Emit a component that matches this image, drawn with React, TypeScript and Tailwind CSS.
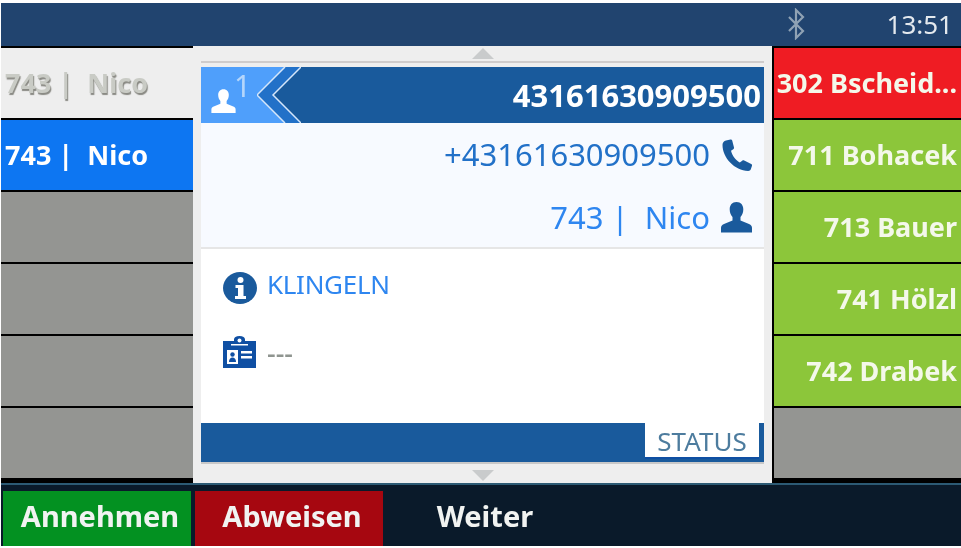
const PersonIcon = ({ className }: { className: string }) => (
  <svg viewBox="0 0 32 32" className={className} fill="currentColor">
    <path d="M16 1c-4.400 0-6.800 3.200-6.800 7.400 0 3.200 1.200 5.800 2.800 7.600v3.400L3.500 23C1.300 24 .5 25 .5 27v4.500h31V27c0-2-.8-3-3-4L20 19.400V16c1.600-1.800 2.800-4.400 2.800-7.600C22.800 4.200 20.400 1 16 1z" />
  </svg>
);

const PhoneIcon = ({ className }: { className: string }) => (
  <svg viewBox="0 0 32 32" className={className} fill="currentColor">
    <path d="M5 1.500 9.500.5c.8-.2 1.500.2 1.700 1l1.800 7c.2.700-.1 1.300-.7 1.700l-2.300 1.500c1.200 5 4.500 9.300 8.800 11.700l2.400-1.700c.6-.4 1.300-.5 2-.2l7 3.400c.7.300 1 1 .8 1.800l-1.200 3.600c-.4 1.100-1.400 1.700-2.600 1.700C13.500 31.500 1.500 19 1.500 5.800 1.500 3.600 3 2 5 1.500z" />
  </svg>
);

const InfoIcon = () => (
  <svg viewBox="0 0 34 32" className="w-[34px] h-[32px] text-[#1a5a9c]">
    <ellipse cx="17" cy="16" rx="17" ry="16" fill="currentColor" />
    <circle cx="17.500" cy="8" r="3" fill="white" />
    <path d="M12.500 13h8v11h2.500v3H12v-3h3v-8h-2.500z" fill="white" />
  </svg>
);

const BadgeIcon = () => (
  <svg viewBox="0 0 33 32" className="w-[33px] h-[32px]">
    <path d="M0 5h11V3.500C11 1.500 13 0 16.500 0S22 1.500 22 3.500V5h11v27H0z" fill="#0f4fa3" />
    <circle cx="16.500" cy="4.500" r="2" fill="white" />
    <rect x="8" y="8" width="17" height="1.500" fill="white" />
    <rect x="4" y="14" width="11" height="14" fill="white" />
    <circle cx="9.500" cy="18.500" r="2.200" fill="#0f4fa3" />
    <path d="M6 26c0-3 1.500-4.500 3.500-4.500S13 23 13 26z" fill="#0f4fa3" />
    <rect x="18" y="15" width="11" height="2.500" fill="white" />
    <rect x="18" y="20" width="11" height="2.500" fill="white" />
  </svg>
);

const BluetoothIcon = () => (
  <svg viewBox="0 0 18 32" className="w-[18px] h-[32px]" fill="none" stroke="#8fa2b4" strokeWidth="2.200">
    <path d="M2 9 16 23 9 30V2l7 7L2 23" />
  </svg>
);

const Arrow = ({ up }: { up: boolean }) => (
  <svg viewBox="0 0 22 11" className="w-[22px] h-[11px]">
    <path d={up ? "M0 11 11 0l11 11z" : "M0 0h22L11 11z"} fill="#c9cbcc" />
  </svg>
);

const leftRows = [
  { label: "743 |  Nico", cls: "bg-[#eeeeee] text-[#c9cbc5] [text-shadow:1px_2px_1px_#8a8a84]" },
  { label: "743 |  Nico", cls: "bg-[#0d76f2] text-white" },
  { label: "", cls: "bg-[#949592]" },
  { label: "", cls: "bg-[#949592]" },
  { label: "", cls: "bg-[#949592]" },
  { label: "", cls: "bg-[#949592]" },
];

const rightRows = [
  { label: "302 Bscheid...", cls: "bg-[#ef1c23]" },
  { label: "711 Bohacek", cls: "bg-[#8cc63a]" },
  { label: "713 Bauer", cls: "bg-[#8cc63a]" },
  { label: "741 Hölzl", cls: "bg-[#8cc63a]" },
  { label: "742 Drabek", cls: "bg-[#8cc63a]" },
  { label: "", cls: "bg-[#949592]" },
];

export default function App() {
  return (
    <div className="w-[961px] h-[548px] overflow-hidden bg-white pt-[3px] pl-[1px] pb-[2px] flex flex-col font-['Noto_Sans',sans-serif] blur-[0.6px]">
      <header className="h-[43px] shrink-0 bg-[#21446f] flex items-center justify-end pb-[2px]">
        <BluetoothIcon />
        <span className="ml-[82px] mr-[8px] text-[26px] leading-none text-[#e4e9ee]">13:51</span>
      </header>

      <main className="h-[437px] shrink-0 flex bg-black">
        <div className="w-[192px] shrink-0 flex flex-col gap-[2px] pt-[2px]">
          {leftRows.map((r, i) => (
            <div key={i} className={`h-[70px] shrink-0 flex items-center pl-[4px] font-bold text-[27px] whitespace-pre ${r.cls}`}>
              {r.label}
            </div>
          ))}
        </div>

        <section className="w-[579px] shrink-0 bg-[#eeeeee] px-[8px] flex flex-col">
          <div className="h-[15px] shrink-0 flex justify-center items-end pb-[2px]">
            <Arrow up />
          </div>
          <div className="h-[6px] shrink-0 border-t-2 border-[#cfcccc]" />

          <div className="h-[56px] shrink-0 flex bg-[#195a9c]">
            <div className="w-[56px] shrink-0 bg-[#4f9ffb] flex items-end pl-[10px] pb-[9px] relative text-white">
              <PersonIcon className="w-[25px] h-[26px]" />
              <span className="text-[30px] leading-none text-[#b5d6fb] absolute left-[33px] top-[4px]">1</span>
            </div>
            <svg viewBox="0 0 44 56" className="w-[44px] h-[56px] shrink-0">
              <rect width="44" height="56" fill="#195a9c" />
              <path d="M0 0h28L0 28l28 28H0z" fill="#4f9ffb" />
              <path d="M28 0 0 28l28 28h16L16 28 44 0z" fill="#2271c8" />
              <path d="M28 0 0 28l28 28M44 0 16 28l28 28" fill="none" stroke="#d5e6fa" strokeWidth="1.500" />
            </svg>
            <div className="flex-1 flex items-center justify-end pr-[3px] text-white font-bold text-[31px] leading-none">
              43161630909500
            </div>
          </div>

          <div className="h-[126px] shrink-0 bg-[#f7faff] border-b-2 border-[#e6e6e6] flex flex-col">
            <div className="h-[63px] shrink-0 flex items-center justify-end pr-[11px] gap-[11px] text-[31px] leading-none text-[#2271c8]">
              <span>+43161630909500</span>
              <PhoneIcon className="w-[32px] h-[32px] text-[#1a5a9c]" />
            </div>
            <div className="h-[62px] shrink-0 flex items-center justify-end pr-[11px] gap-[10px] text-[31px] leading-none text-[#2e86f0] whitespace-pre">
              <span>743 |  Nico</span>
              <PersonIcon className="w-[33px] h-[32px] text-[#1a5a9c]" />
            </div>
          </div>

          <div className="h-[174px] shrink-0 bg-white flex flex-col pl-[22px]">
            <div className="h-[55px] shrink-0 flex items-end gap-[10px]">
              <InfoIcon />
              <span className="text-[26px] leading-[32px] pb-[4px] h-[36px] tracking-[-0.3px] text-[#2e86f0]">KLINGELN</span>
            </div>
            <div className="mt-[32px] flex items-center gap-[11px]">
              <BadgeIcon />
              <span className="text-[27px] leading-none font-medium text-[#8f9590]">---</span>
            </div>
          </div>

          <div className="h-[41px] shrink-0 bg-[#195a9c] border-b-2 border-[#c8c8c8] flex justify-end">
            <div className="w-[114px] h-[36px] mr-[5px] pt-[2px] bg-white border-b-2 border-[#0f4fa3] flex items-center justify-center text-[26px] leading-none text-[#4d7c9e]">
              STATUS
            </div>
          </div>

          <div className="flex-1 flex justify-center items-start pt-[6px]">
            <Arrow up={false} />
          </div>
        </section>

        <div className="flex-1 flex flex-col gap-[2px] pt-[2px] pl-[2px]">
          {rightRows.map((r, i) => (
            <div key={i} className={`h-[70px] shrink-0 flex items-center justify-end pr-[4px] font-bold text-[27px] text-[#f4f8ea] whitespace-nowrap ${r.cls}`}>
              {r.label}
            </div>
          ))}
        </div>
      </main>

      <footer className="flex-1 bg-[#0a1a2a] border-t-2 border-[#2c5a74] flex gap-[4px] pt-[6px] pl-[2px] text-[#f1f3f1] font-bold text-[29px] leading-none">
        <div className="w-[188px] bg-[#039121] flex items-center justify-center pl-[6px] pb-[6px]">Annehmen</div>
        <div className="w-[188px] bg-[#a60710] flex items-center justify-center pl-[6px] pb-[6px]">Abweisen</div>
        <div className="w-[196px] flex items-center justify-center pb-[6px]">Weiter</div>
      </footer>
    </div>
  );
}
